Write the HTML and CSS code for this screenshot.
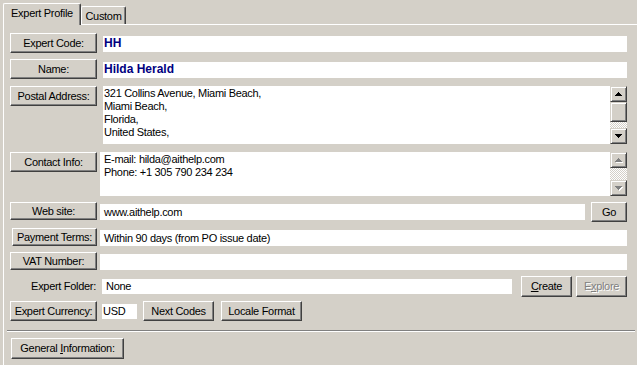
FILE: index.html
```html
<!DOCTYPE html>
<html lang="en">
<head>
    <meta charset="UTF-8">
    <title>Expert Profile</title>
    <link rel="stylesheet" href="styles.css">
</head>
<body>
    <div class="tabs">
        <div class="tab tab-active">Expert Profile</div>
        <div class="tab tab-custom">Custom</div>
    </div>

    <div class="panel">
        <div class="row">
            <button class="btn btn-label">Expert Code:</button>
            <div class="field field-name">HH</div>
        </div>

        <div class="row">
            <button class="btn btn-label">Name:</button>
            <div class="field field-name">Hilda Herald</div>
        </div>

        <div class="row row-postal">
            <button class="btn btn-label">Postal Address:</button>
            <div class="memo memo-postal">
                321 Collins Avenue, Miami Beach,<br>
                Miami Beach,<br>
                Florida,<br>
                United States,
            </div>
            <div class="scrollbar">
                <div class="sb-btn">
                    <svg width="7" height="4" viewBox="0 0 7 4"><path d="M3 0h1v1H3zM2 1h3v1H2zM1 2h5v1H1zM0 3h7v1H0z" fill="#000"/></svg>
                </div>
                <div class="sb-thumb"></div>
                <div class="sb-track"></div>
                <div class="sb-btn">
                    <svg width="7" height="4" viewBox="0 0 7 4"><path d="M0 0h7v1H0zM1 1h5v1H1zM2 2h3v1H2zM3 3h1v1H3z" fill="#000"/></svg>
                </div>
            </div>
        </div>

        <div class="row row-contact">
            <button class="btn btn-label">Contact Info:</button>
            <div class="memo memo-contact">
                E-mail: hilda@aithelp.com<br>
                Phone: +1 305 790 234 234
            </div>
            <div class="scrollbar">
                <div class="sb-btn">
                    <svg width="8" height="5" viewBox="0 0 8 5"><path d="M4 1h1v1H4zM3 2h3v1H3zM2 3h5v1H2zM1 4h7v1H1z" fill="#fff"/><path d="M3 0h1v1H3zM2 1h3v1H2zM1 2h5v1H1zM0 3h7v1H0z" fill="#808080"/></svg>
                </div>
                <div class="sb-track"></div>
                <div class="sb-btn">
                    <svg width="8" height="5" viewBox="0 0 8 5"><path d="M1 1h7v1H1zM2 2h5v1H2zM3 3h3v1H3zM4 4h1v1H4z" fill="#fff"/><path d="M0 0h7v1H0zM1 1h5v1H1zM2 2h3v1H2zM3 3h1v1H3z" fill="#808080"/></svg>
                </div>
            </div>
        </div>

        <div class="row">
            <button class="btn btn-label btn-short">Web site:</button>
            <div class="field field-text field-web">www.aithelp.com</div>
            <button class="btn btn-go">Go</button>
        </div>

        <div class="row">
            <button class="btn btn-label btn-short btn-payment">Payment Terms:</button>
            <div class="field field-text">Within 90 days (from PO issue date)</div>
        </div>

        <div class="row">
            <button class="btn btn-label btn-short">VAT Number:</button>
            <div class="field field-text"></div>
        </div>

        <div class="row">
            <div class="plain-label">Expert Folder:</div>
            <div class="field field-folder">None</div>
            <button class="btn btn-folder btn-create"><span><u>C</u>reate</span></button>
            <button class="btn btn-folder btn-disabled"><span>E<u>x</u>plore</span></button>
        </div>

        <div class="row row-currency">
            <button class="btn btn-label">Expert Currency:</button>
            <div class="field field-currency">USD</div>
            <button class="btn btn-next">Next Codes</button>
            <button class="btn btn-locale">Locale Format</button>
        </div>

        <div class="separator"></div>

        <div class="row">
            <button class="btn btn-general"><span>General <u>I</u>nformation:</span></button>
        </div>
    </div>
</body>
</html>
```

FILE: styles.css
```css
* {
    margin: 0;
    padding: 0;
    box-sizing: border-box;
}

body {
    background: #d4d0c8;
    font-family: 'Liberation Sans', Arial, sans-serif;
    font-size: 11px;
    line-height: 13px;
    letter-spacing: -0.3px;
    color: #000;
    height: 365px;
    overflow: hidden;
}

/* Tabs */
.tabs {
    display: flex;
    align-items: flex-end;
    padding: 3px 0 0 3px;
}

.tab {
    border: 1px solid;
    border-color: #fff #404040 transparent #fff;
    border-bottom: none;
    border-radius: 2px 2px 0 0;
    box-shadow: inset -1px 0 #808080;
    padding-top: 3px;
    text-align: center;
    background: #d4d0c8;
}

.tab-active {
    width: 78px;
    height: 22px;
    margin-bottom: -1px;
    position: relative;
    z-index: 1;
}

.tab-custom {
    width: 45px;
    height: 18px;
}

/* Panel */
.panel {
    margin-left: 3px;
    height: 341px;
    border-top: 1px solid #fff;
    border-left: 1px solid #fff;
    padding: 8px 10px 0 6px;
    display: flex;
    flex-direction: column;
    gap: 6px;
}

.row {
    display: flex;
    align-items: flex-start;
}

.row-postal { margin-top: 1px; }
.row-contact { margin-top: 2px; }
.row-currency { margin-top: -2px; }

/* Buttons */
.btn {
    display: flex;
    align-items: center;
    justify-content: center;
    height: 20px;
    background: #d4d0c8;
    border: 1px solid;
    border-color: #fff #404040 #404040 #fff;
    box-shadow: inset -1px -1px #808080;
    font: inherit;
    letter-spacing: inherit;
    color: #000;
    white-space: nowrap;
}

.btn-label { width: 87px; }
.btn-short { height: 18px; }
.btn-payment { width: 85px; margin-left: 2px; }

.btn-go {
    width: 36px;
    margin-left: 6px;
}

.btn-folder {
    width: 51px;
    height: 21px;
    margin-left: 4px;
}

.btn-create { margin-left: 9px; }

.btn-disabled {
    color: #808080;
    text-shadow: 1px 1px 0 #fff;
}

.btn-next {
    width: 71px;
    margin-left: 6px;
}

.btn-locale {
    width: 81px;
    margin-left: 7px;
}

.btn-general {
    width: 113px;
    height: 21px;
    margin-left: 1px;
}

/* Fields */
.field {
    flex: 1;
    height: 16px;
    background: #fff;
    padding: 2px 0 0 1px;
    margin: 3px 0 0 6px;
    white-space: nowrap;
}

.field-name {
    color: #000080;
    font-weight: bold;
    font-size: 12px;
    letter-spacing: 0;
    padding-top: 1px;
}

.field-text {
    margin: 2px 0 0 3px;
    padding-left: 4px;
}

.field-web { flex: 1; }

.field-folder {
    height: 15px;
    margin-left: 5px;
    padding: 1px 0 0 4px;
}

.field-currency {
    flex: none;
    width: 35px;
    height: 15px;
    margin-left: 5px;
    padding: 1px 0 0 1px;
}

.plain-label {
    width: 87px;
    text-align: right;
    padding: 4px 1px 0 0;
}

/* Memo boxes */
.memo {
    flex: 1;
    background: #fff;
    padding: 1px 0 0 1px;
}

.memo-postal {
    height: 58px;
    margin-left: 6px;
}

.memo-contact {
    height: 44px;
    margin-left: 3px;
    padding-left: 4px;
}

/* Scrollbars */
.scrollbar {
    width: 17px;
    display: flex;
    flex-direction: column;
    align-self: stretch;
}

.sb-btn, .sb-thumb {
    display: flex;
    align-items: center;
    justify-content: center;
    height: 16px;
    background: #d4d0c8;
    border: 1px solid;
    border-color: #d4d0c8 #404040 #404040 #d4d0c8;
    box-shadow: inset 1px 1px #fff, inset -1px -1px #808080;
}

.sb-thumb { height: 20px; }

.sb-track {
    flex: 1;
    background: repeating-conic-gradient(#fff 0 25%, #d4d0c8 0 50%) 0 0 / 2px 2px;
}

.separator {
    height: 2px;
    border-top: 1px solid #808080;
    border-bottom: 1px solid #fff;
    margin: 3px -8px 0 -3px;
}
```
